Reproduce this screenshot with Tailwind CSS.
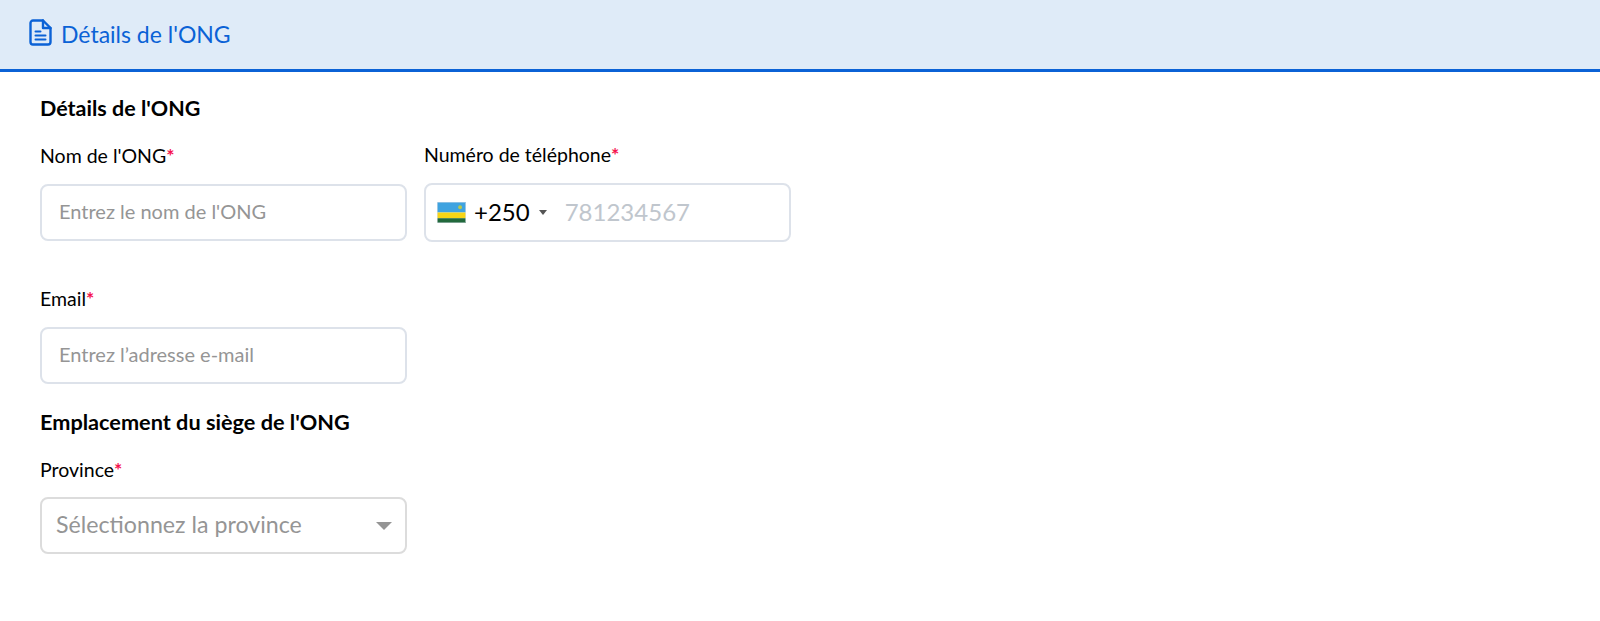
<!DOCTYPE html>
<html lang="fr">

<head>
    <meta charset="UTF-8">
    <meta name="viewport" content="width=device-width, initial-scale=1.0">
    <title>Détails de l'ONG</title>
    <script src="https://cdn.jsdelivr.net/npm/@tailwindcss/browser@4"></script>
</head>

<body class="min-h-screen bg-white font-['Lato','Noto_Sans',sans-serif] text-black">
    <header class="h-[72px] bg-[#dfebf8] border-b-[3px] border-[#0b62d6] flex items-center pl-[29px] pb-[1px] gap-[9px] text-[#0b62d6]">
        <svg class="w-[23px] h-[27px] mb-[3px]" viewBox="0 0 23 27" fill="none" stroke="currentColor" stroke-width="2.4" stroke-linejoin="round" stroke-linecap="round">
            <path d="M4 1.5h10l7.5 7.5v14a2.5 2.5 0 0 1-2.5 2.5H4A2.5 2.5 0 0 1 1.5 23V4A2.5 2.5 0 0 1 4 1.5z" />
            <path d="M14 1.5V9h7.5" />
            <path d="M6.5 12.5h5M6.5 16.5h10M6.5 20.5h10" stroke-width="2" />
        </svg>
        <span class="text-[23px] leading-none">Détails de l'ONG</span>
    </header>

    <main class="pl-[40px] pt-[24px]">
        <h2 class="text-[21.5px] font-bold leading-[24px]">Détails de l'ONG</h2>

        <div class="flex gap-[17px] mt-[24px]">
            <div class="w-[367px]">
                <label class="block text-[19.5px] leading-[24px]">Nom de l'ONG<span class="text-[#f5134f] font-bold">*</span></label>
                <input class="mt-[16px] block w-full h-[57px] pl-[17px] pr-[18px] pb-[3px] text-[20px] border-2 border-[#dde2ea] rounded-[8px] placeholder:text-[#959595]" placeholder="Entrez le nom de l'ONG">
            </div>
            <div class="w-[367px]">
                <label class="block text-[19.5px] leading-[24px] -mt-[1px]">Numéro de téléphone<span class="text-[#f5134f] font-bold">*</span></label>
                <div class="mt-[16px] h-[59px] flex items-center border-2 border-[#dde2ea] rounded-[8px] pl-[11px] pb-[1px]">
                    <svg class="w-[29px] h-[21px] shrink-0" viewBox="0 0 30 22">
                        <rect width="30" height="11" fill="#3fa3e0" />
                        <rect y="11" width="30" height="6" fill="#f7d516" />
                        <rect y="17" width="30" height="5" fill="#22693c" />
                        <circle cx="24" cy="5.5" r="2" fill="#b9c94a" />
                        <rect x="0.25" y="0.25" width="29.5" height="21.5" fill="none" stroke="#d8dee8" stroke-width="0.5" />
                    </svg>
                    <span class="ml-[8px] text-[24px] leading-none">+250</span>
                    <span class="ml-[9px] w-0 h-0 border-x-[4px] border-x-transparent border-t-[5px] border-t-[#555]"></span>
                    <input class="ml-[18px] w-[200px] text-[24px] placeholder:text-[#c0c6cd]" placeholder="781234567">
                </div>
            </div>
        </div>

        <div class="w-[367px] mt-[45px]">
            <label class="block text-[19.5px] leading-[24px]">Email<span class="text-[#f5134f] font-bold">*</span></label>
            <input class="mt-[16px] block w-full h-[57px] pl-[17px] pr-[18px] pb-[3px] text-[20px] border-2 border-[#dde2ea] rounded-[8px] placeholder:text-[#959595]" placeholder="Entrez l’adresse e-mail">
        </div>

        <h2 class="text-[21.7px] font-bold leading-[24px] mt-[26px]">Emplacement du siège de l'ONG</h2>

        <div class="w-[367px] mt-[24px]">
            <label class="block text-[19.5px] leading-[24px]">Province<span class="text-[#f5134f] font-bold">*</span></label>
            <div class="mt-[15px] h-[57px] flex items-center justify-between border-2 border-[#dcdcdc] rounded-[8px] pl-[14px] pr-[13px]">
                <span class="text-[23.2px] text-[#959595] -mt-[3px]">Sélectionnez la province</span>
                <span class="w-0 h-0 border-x-[8px] border-x-transparent border-t-[8px] border-t-[#959595]"></span>
            </div>
        </div>
    </main>
</body>

</html>
